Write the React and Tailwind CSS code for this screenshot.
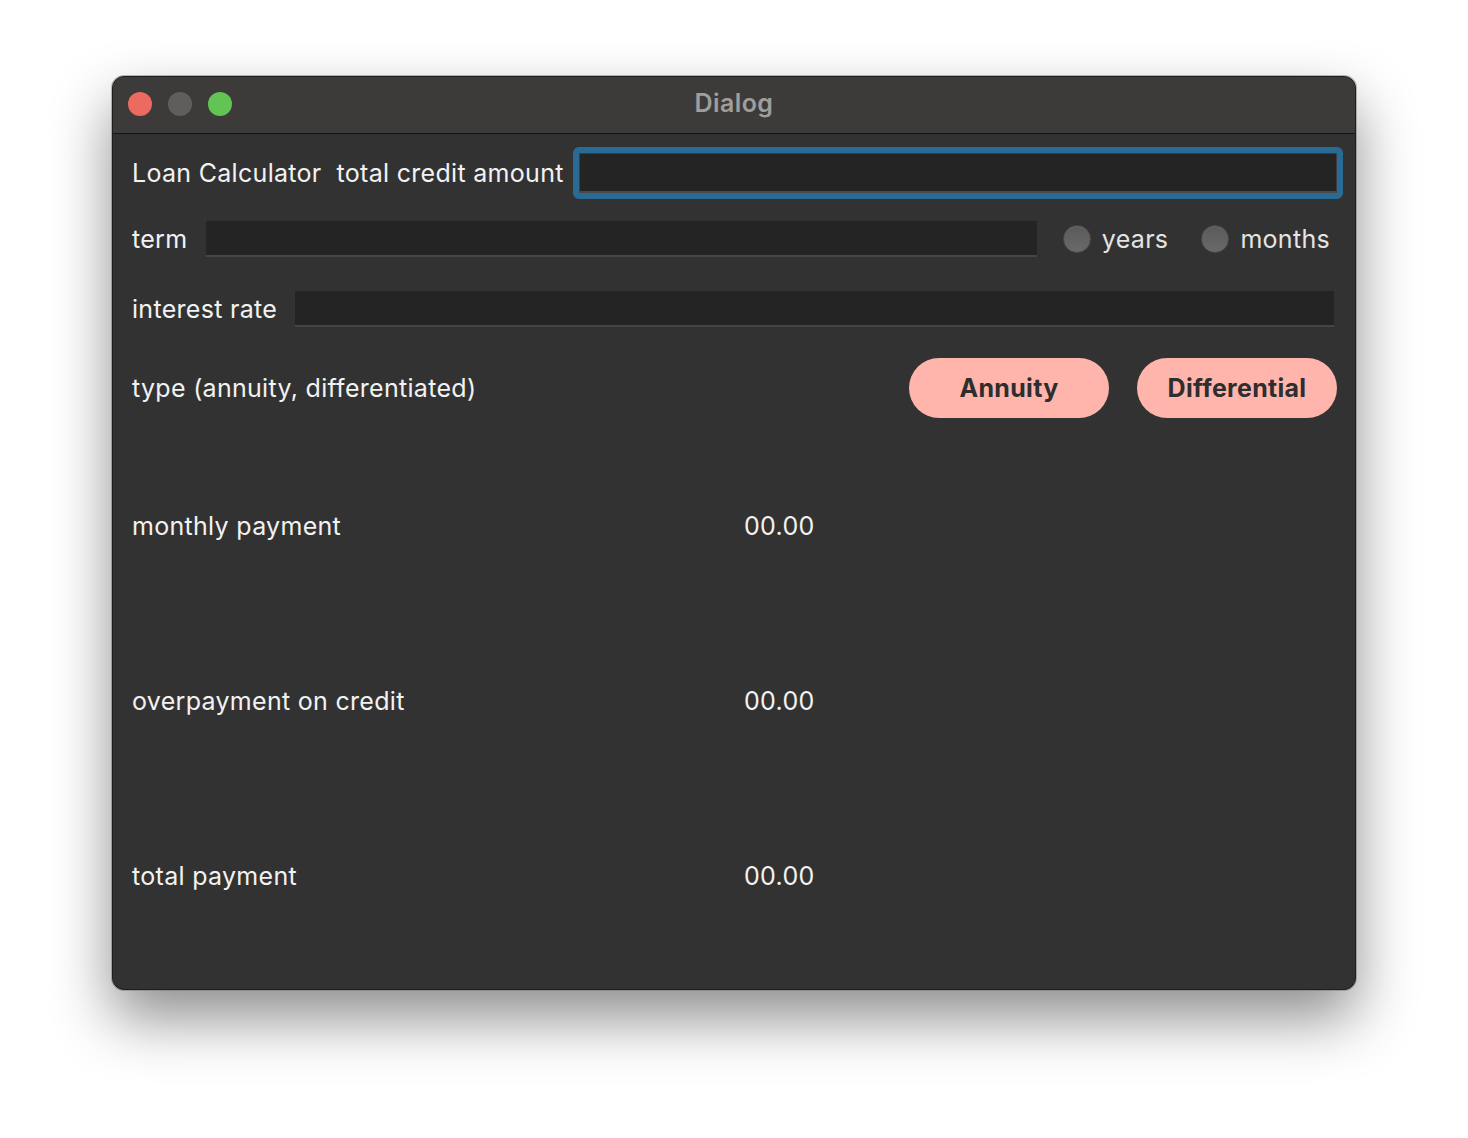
import React from 'react'

function Radio({ label }){
  return (
    <label className="flex items-center gap-[11px]">
      <span className="w-[28px] h-[28px] rounded-full bg-gradient-to-b from-[#5a5a5a] to-[#6a6a6a] border border-[#4a4a4a] shadow-[inset_0_1px_0_rgba(255,255,255,0.08)]" />
      <span className="text-[#e4e4e4]">{label}</span>
    </label>
  )
}

function Field({ className = '' }){
  return <div className={`h-[36px] bg-[#242424] border-b-2 border-[#464646] ${className}`} />
}

function Result({ label, value, className = '' }){
  return (
    <div className={`flex items-center h-[40px] ${className}`}>
      <div className="w-[612px]">{label}</div>
      <div>{value}</div>
    </div>
  )
}

export default function App(){
  return (
    <div className="min-h-[1138px] bg-white pt-[76px] pl-[112px]" style={{ fontFamily: 'Inter, "Noto Sans", sans-serif' }}>
      <div className="w-[1244px] h-[914px] rounded-[12px] overflow-hidden bg-[#323232] border border-[#1e1e1e] shadow-[0_0_0_1px_rgba(120,120,120,0.5),0_28px_60px_rgba(0,0,0,0.45)] flex flex-col">
        <div className="h-[57px] shrink-0 bg-[#3d3b3a] border-b border-[#151515] flex items-center relative">
          <div className="flex items-center gap-[16px] pl-[15px] pb-[2px]">
            <span className="w-[24px] h-[24px] rounded-full bg-[#ec6a5f]" />
            <span className="w-[24px] h-[24px] rounded-full bg-[#5f5e5d]" />
            <span className="w-[24px] h-[24px] rounded-full bg-[#61c454]" />
          </div>
          <div className="absolute inset-0 flex items-center justify-center pb-[2px] text-[25px] tracking-[0.4px] font-semibold text-[#a09e9c] pointer-events-none">Dialog</div>
        </div>

        <div className="flex-1 pl-[19px] text-[25px] leading-[30px] text-[#f2f2f2] tracking-[0.3px]">
          <div className="flex items-center h-[54px] mt-[12px] pr-[12px]">
            <span>Loan Calculator</span>
            <span className="ml-[15px]">total credit amount</span>
            <div className="flex-1 ml-[9px] rounded-[6px] border-[6px] border-[#2a6b96]">
              <div className="h-[40px] bg-[#242424] border border-[#3e3e3e] border-b-2 border-b-[#4a4a4a]" />
            </div>
          </div>

          <div className="flex items-center h-[36px] mt-[21px] pr-[25px]">
            <span>term</span>
            <Field className="flex-1 ml-[19px] mr-[26px]" />
            <Radio label="years" />
            <div className="ml-[33px]"><Radio label="months" /></div>
          </div>

          <div className="flex items-center h-[36px] mt-[34px] pr-[21px]">
            <span>interest rate</span>
            <Field className="flex-1 ml-[18px]" />
          </div>

          <div className="flex items-center h-[60px] mt-[31px] pr-[18px]">
            <span className="flex-1">type (annuity, differentiated)</span>
            <button className="w-[200px] h-[60px] rounded-full bg-[#ffb4ac] text-[#2e2e2e] font-bold">Annuity</button>
            <button className="w-[200px] h-[60px] rounded-full bg-[#ffb4ac] text-[#2e2e2e] font-bold ml-[28px]">Differential</button>
          </div>

          <Result label="monthly payment" value="00.00" className="mt-[88px]" />
          <Result label="overpayment on credit" value="00.00" className="mt-[135px]" />
          <Result label="total payment" value="00.00" className="mt-[135px]" />
        </div>
      </div>
    </div>
  )
}
